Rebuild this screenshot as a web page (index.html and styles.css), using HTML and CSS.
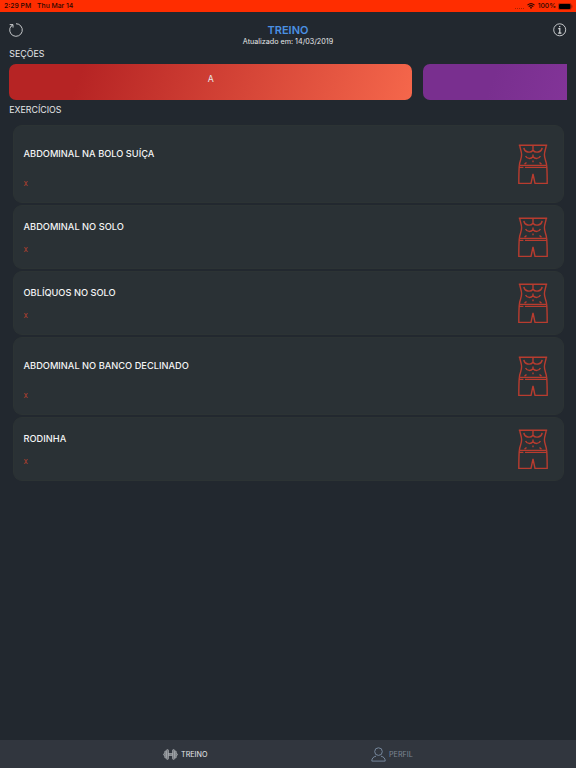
FILE: index.html
```
<!DOCTYPE html>
<html lang="pt-BR">

<head>
    <meta charset="UTF-8">
    <meta name="viewport" content="width=device-width, initial-scale=1.0">
    <title>Treino</title>
    <link rel="stylesheet" href="styles.css">
</head>

<body>
    <svg class="defs">
        <symbol id="abs" viewBox="0 0 30 40">
            <path d="M.8 1.2H29.2M1.8 1.2C1.9 4.5 3.6 7 3.6 10.8C3.6 15 1.7 17 1.4 21.2M28.2 1.2C28.1 4.5 26.4 7 26.4 10.8C26.4 15 28.3 17 28.6 21.2" />
            <path d="M1.3 21.4H28.7M7 23.4H28.7M1.3 23.4H5.4M1.3 21.4C.9 27 .8 33 .8 39.4H13L15 30L17 39.4H29.2C29.2 33 29.1 27 28.7 21.4" />
            <path d="M15 2V7.5M5.8 3.8C6.6 8.6 12.5 9.4 15 6.2C17.5 9.4 23.4 8.6 24.2 3.8M15 10.5V14M7.6 12C9 15.2 13 15 15 12.8C17 15 21 15.2 22.4 12M15 16.5V18.2M6.5 20.3L8.5 18.5M23.5 20.3L21.5 18.5" />
        </symbol>
    </svg>
    <div class="status">
        <span>2:29 PM</span>
        <span class="date">Thu Mar 14</span>
        <div class="statusRight">
            <span class="dots"></span>
            <svg width="8" height="6" viewBox="0 0 8 6">
                <path d="M.5 2.2Q4-1 7.5 2.2M1.7 3.6Q4 1.5 6.3 3.6" fill="none" stroke="#2b0800" stroke-width="1.1" />
                <path d="M2.8 4.5Q4 3.6 5.2 4.5L4 5.9Z" fill="#2b0800" />
            </svg>
            <span class="percent">100%</span>
            <svg width="15" height="7" viewBox="0 0 15 7">
                <rect x=".4" y=".4" width="12.7" height="6.2" rx="1.5" fill="none" stroke="#8c1b00" stroke-width=".6" />
                <rect x="1" y="1" width="11.5" height="5" rx="1" fill="#000" />
                <path d="M13.9 2.4V4.6" stroke="#8c1b00" stroke-width=".8" />
            </svg>
        </div>
    </div>
    <div class="header">
        <svg class="headerIcon" width="14" height="14" viewBox="0 0 14 14">
            <path d="M7 .7A6.3 6.3 0 1 1 2.3 2.8M.7 1.6H4V4.6M4 1.6L2 3.4" />
        </svg>
        <div class="headerTitle">
            <h1>TREINO</h1>
            <p>Atualizado em: 14/03/2019</p>
        </div>
        <svg class="headerIcon" width="14" height="14" viewBox="0 0 14 14">
            <circle cx="6.7" cy="6.8" r="6" />
            <path d="M5.3 5.6H6.8V10.2M5.2 10.2H8.4M6.7 2.9V4.3" class="bold" />
        </svg>
    </div>
    <h2 class="label">SEÇÕES</h2>
    <div class="sections">
        <div class="section red">A</div>
        <div class="section purple"></div>
    </div>
    <h2 class="label labelExercises">EXERCÍCIOS</h2>
    <ul class="list">
        <li class="tall">
            <div>
                <h3>ABDOMINAL NA BOLO SUÍÇA</h3>
                <p>x</p>
            </div>
            <svg class="abs"><use href="#abs" /></svg>
        </li>
        <li>
            <div>
                <h3>ABDOMINAL NO SOLO</h3>
                <p>x</p>
            </div>
            <svg class="abs"><use href="#abs" /></svg>
        </li>
        <li>
            <div>
                <h3>OBLÍQUOS NO SOLO</h3>
                <p>x</p>
            </div>
            <svg class="abs"><use href="#abs" /></svg>
        </li>
        <li class="tall">
            <div>
                <h3>ABDOMINAL NO BANCO DECLINADO</h3>
                <p>x</p>
            </div>
            <svg class="abs"><use href="#abs" /></svg>
        </li>
        <li>
            <div>
                <h3>RODINHA</h3>
                <p>x</p>
            </div>
            <svg class="abs"><use href="#abs" /></svg>
        </li>
    </ul>
    <div class="tabs">
        <div class="tab tabTreino active">
            <svg width="15" height="11" viewBox="0 0 15 11">
                <rect x="5.5" y="4.6" width="4" height="1.8" />
                <rect x="3.4" y=".6" width="2.1" height="9.8" rx="1" />
                <rect x="9.5" y=".6" width="2.1" height="9.8" rx="1" />
                <rect x="1.7" y="2" width="1.7" height="7" rx=".8" />
                <rect x="11.6" y="2" width="1.7" height="7" rx=".8" />
                <path d="M1.7 4.5Q.5 4.5 .5 5.5T1.7 6.5M13.3 4.5Q14.500 4.500 14.500 5.500T13.300 6.500" />
            </svg>
            <span>TREINO</span>
        </div>
        <div class="tab tabPerfil">
            <svg width="15" height="15" viewBox="0 0 15 15">
                <circle cx="7.5" cy="4.6" r="3.8" />
                <path d="M5 9.2C2.400 9.800 .8 11.200 .8 14.100H14.200C14.200 11.200 12.600 9.800 10 9.200" />
            </svg>
            <span>PERFIL</span>
        </div>
    </div>
</body>

</html>
```

FILE: styles.css
```
* {
    padding: 0px;
    margin: 0px;
    list-style: none;
    box-sizing: border-box;
}

body {
    display: flex;
    flex-direction: column;
    height: 768px;
    overflow: hidden;
    background-color: #22282f;
    color: #e6e7e8;
    font-family: Inter, "Liberation Sans", sans-serif;
}

.defs {
    display: none;
}

.status {
    display: flex;
    align-items: center;
    height: 12px;
    padding: 0px 3px 0px 4px;
    background-color: #ff2d00;
    color: #2b0800;
    font-size: 6.8px;
    font-weight: 500;
    line-height: 12px;
}

.status .date {
    margin-left: 6px;
}

.statusRight {
    display: flex;
    align-items: center;
    margin-left: auto;
}

.statusRight .dots {
    width: 9px;
    margin: 4px 3px 0px 0px;
    border-top: 1px dotted #a82000;
}

.statusRight .percent {
    margin: 0px 2px 0px 3px;
}

.header {
    display: flex;
    justify-content: space-between;
    height: 35px;
    padding: 11px 9px 0px;
}

.headerIcon {
    fill: none;
    stroke: #d5d7d9;
    stroke-width: 0.9;
}

.headerIcon .bold {
    stroke-width: 1.2;
}

.headerTitle {
    text-align: center;
}

.headerTitle h1 {
    color: #4a90e2;
    font-size: 11px;
    font-weight: 600;
    line-height: 14px;
}

.headerTitle p {
    font-size: 7.2px;
    line-height: 9px;
}

.label {
    height: 13px;
    padding-left: 9.3px;
    font-size: 8.8px;
    font-weight: 400;
    line-height: 13px;
}

.sections {
    display: flex;
    gap: 11px;
    height: 36.5px;
    margin: 3.5px 9.3px 0px;
    overflow: hidden;
}

.section {
    flex: none;
    width: 403px;
    height: 36.5px;
    border-radius: 7px;
    text-align: center;
    font-size: 8.8px;
    line-height: 30px;
}

.section.red {
    background: linear-gradient(110deg, #b62424 18%, #f5674b 100%);
}

.section.purple {
    background: linear-gradient(110deg, #792f8f 18%, #a044b4 100%);
}

.labelExercises {
    margin-top: 3px;
}

.list {
    display: flex;
    flex-direction: column;
    gap: 2px;
    margin: 9px 12px 0px 13px;
}

.list li {
    display: flex;
    align-items: center;
    justify-content: space-between;
    height: 64px;
    padding: 0px 15px 0px 9.5px;
    border: 1px solid #2c3334;
    border-radius: 9px;
    background-color: #2a3135;
}

.list li.tall {
    height: 78px;
}

.list h3 {
    padding-top: 1px;
    color: #f3f4f4;
    font-size: 9.25px;
    font-weight: 500;
    line-height: 12px;
}

.list p {
    margin-top: 10px;
    color: #b3402f;
    font-size: 8px;
    line-height: 12px;
}

.list .tall h3 {
    padding-top: 8px;
}

.list .tall p {
    margin-top: 17px;
}

.abs {
    width: 30px;
    height: 40px;
    fill: none;
    stroke: #b83c2f;
    stroke-width: 1.4;
}

.tabs {
    display: flex;
    height: 28px;
    margin-top: auto;
    background-color: #31363e;
}

.tab {
    display: flex;
    align-items: center;
    gap: 3px;
    width: 50%;
    color: #7d8694;
    font-size: 7.2px;
}

.tab svg {
    fill: none;
    stroke: #76879c;
    stroke-width: 1;
}

.tab.active {
    color: #e6e7e8;
}

.tab.active svg {
    fill: #7c8085;
    stroke: #b4b7ba;
    stroke-width: 0.6;
}

.tabTreino {
    padding-left: 163px;
}

.tabPerfil {
    padding-left: 83px;
}
```
